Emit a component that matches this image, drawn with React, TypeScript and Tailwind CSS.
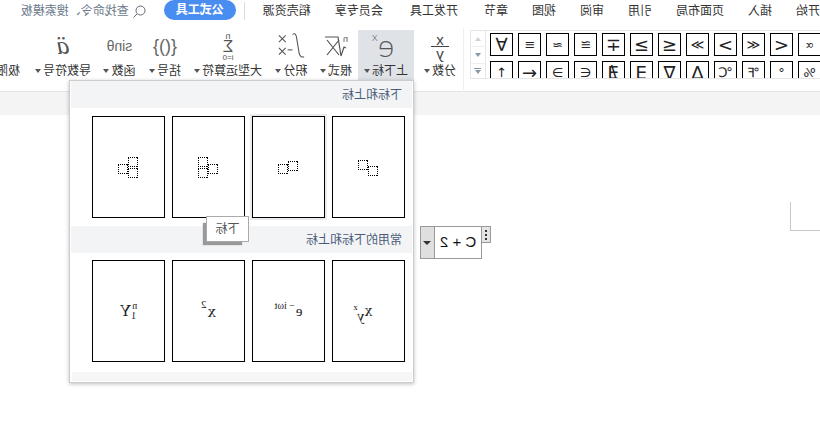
import type { ReactNode } from "react";

const tabs = [
  { name: "开始", cls: "" },
  { name: "插入", cls: "" },
  { name: "页面布局", cls: "" },
  { name: "引用", cls: "" },
  { name: "审阅", cls: "" },
  { name: "视图", cls: "" },
  { name: "章节", cls: "" },
  { name: "开发工具", cls: "ml-[2px]" },
  { name: "会员专享", cls: "ml-[3px]" },
  { name: "稻壳资源", cls: "" },
];

const symbols = [
  { s: "∝", big: false }, { s: "<", big: true }, { s: "≪", big: false }, { s: ">", big: true },
  { s: "≫", big: false }, { s: "≤", big: true }, { s: "≥", big: true }, { s: "∓", big: true },
  { s: "≅", big: false }, { s: "≈", big: false }, { s: "≡", big: false }, { s: "∀", big: true },
  { s: "%", big: false }, { s: "°", big: false }, { s: "℉", big: false }, { s: "℃", big: false },
  { s: "∆", big: true }, { s: "∇", big: true }, { s: "∃", big: true }, { s: "∄", big: true },
  { s: "∈", big: false }, { s: "∋", big: false }, { s: "←", big: true }, { s: "↑", big: false },
];

function Caret() {
  return <span className="inline-block w-0 h-0 border-x-[3px] border-t-[4px] border-x-transparent border-t-[#555]" />;
}

function RibbonButton({ label, width, ml, active, children }: { label: string; width: string; ml: string; active?: boolean; children: ReactNode }) {
  return (
    <div className={`${width} ${ml} ${active ? "bg-[#dfe3e8]" : ""} h-[50px] shrink-0 flex flex-col items-center justify-between`}>
      <div className="h-[32px] w-full flex items-center justify-center text-[#555]">{children}</div>
      <div className="h-[18px] flex items-center gap-[2px] text-[12px] text-[#333] whitespace-nowrap leading-none">
        {label}
        <Caret />
      </div>
    </div>
  );
}

function TemplateCell({ hover, children }: { hover?: boolean; children: ReactNode }) {
  return (
    <div className={`relative w-[73px] h-[102px] border border-black bg-white flex items-center justify-center ${hover ? "outline-[2px] outline-[#e8ecf0]" : ""}`}>
      {children}
    </div>
  );
}

function Dot({ className }: { className: string }) {
  return <span className={`absolute w-[10px] h-[10px] border border-dotted border-black ${className}`} />;
}

function SectionHeader({ title }: { title: string }) {
  return (
    <div className="mx-[1px] h-[27px] bg-[#f3f4f6] flex items-center pl-[10px] text-[12px] text-[#4a5a78]">{title}</div>
  );
}

export default function App() {
  return (
    <div className="relative w-[820px] h-[421px] overflow-hidden bg-white -scale-x-100 font-['Liberation_Sans','Noto_Sans_CJK_SC',sans-serif]">
      {/* tab row */}
      <div className="h-[22px] flex items-center text-[12px] text-[#333]">
        <div className="flex gap-6">
          {tabs.map((t) => (
            <span key={t.name} className={`${t.cls} whitespace-nowrap`}>{t.name}</span>
          ))}
        </div>
        <div className="ml-[18px] w-px h-[18px] bg-[#ddd]" />
        <div className="ml-[8px] w-[72px] h-[20px] -mt-[2px] rounded-full bg-[#4a8df0] text-white font-bold flex items-center justify-center">公式工具</div>
        <svg className="ml-[18px]" width="13" height="13" viewBox="0 0 13 13" fill="none" stroke="#667">
          <circle cx="5.5" cy="5.5" r="4.5" />
          <path d="M9 9l3.5 3.5" />
        </svg>
        <span className="ml-[4px] whitespace-nowrap text-[#6c7a8c]">查找命令、搜索模板</span>
      </div>

      {/* ribbon */}
      <div className="h-[70px] flex pt-[8px] border-b border-[#e4e4e4]">
        <div className="-ml-[1px] w-[351px] h-[49px] shrink-0 flex overflow-hidden border-y border-r border-[#e6e6e6] bg-white">
          <div className="w-[335px] shrink-0 grid grid-cols-[repeat(12,23px)] auto-rows-[23px] gap-[5px] pt-[2px]">
            {symbols.map(({ s, big }) => (
              <div key={s} className={`border border-black flex items-center justify-center leading-none text-[#222] font-['DejaVu_Sans',sans-serif] ${big ? "text-[18px]" : "text-[13px]"}`}>{s}</div>
            ))}
          </div>
          <div className="w-[15px] flex flex-col border-l border-[#e6e6e6] text-[#9aa5b1]">
            <div className="h-[16px] flex items-center justify-center border-b border-[#eee]">
              <span className="w-0 h-0 border-x-[3px] border-b-[4px] border-x-transparent border-b-[#ccd2d8]" />
            </div>
            <div className="h-[17px] flex items-center justify-center border-b border-[#eee]">
              <span className="w-0 h-0 border-x-[3px] border-t-[4px] border-x-transparent border-t-[#8d98a5]" />
            </div>
            <div className="h-[14px] flex flex-col items-center justify-center gap-[1px]">
              <span className="w-[7px] h-px bg-[#8d98a5]" />
              <span className="w-0 h-0 border-x-[3px] border-t-[4px] border-x-transparent border-t-[#8d98a5]" />
            </div>
          </div>
        </div>
        <div className="ml-[6px] w-px h-[62px] -mt-[2px] bg-[#eee] shrink-0" />

        <RibbonButton label="分数" width="w-[36px]" ml="ml-[5px]">
          <div className="flex flex-col items-center text-[15px] leading-[11px] text-[#444]">
            <span>x</span>
            <span className="w-[18px] h-px my-[1px] bg-[#444]" />
            <span>y</span>
          </div>
        </RibbonButton>
        <RibbonButton label="上下标" width="w-[56px]" ml="ml-[8px]" active>
          <div className="relative mt-[3px] text-[28px] leading-none text-[#555] font-['DejaVu_Sans',sans-serif] font-light">
            e<span className="absolute -top-[2px] -right-[6px] text-[11px] leading-none">x</span>
          </div>
        </RibbonButton>
        <RibbonButton label="根式" width="w-[32px]" ml="ml-[6px]">
          <svg width="32" height="26" viewBox="0 0 32 26" fill="none" stroke="#555" strokeWidth="1.2">
            <path d="M6 15l2-1 3 9 3-19h13" />
            <path d="M13 7l12 15M25 7L13 22" />
            <text x="4" y="9" fontSize="9" fill="#555" stroke="none">n</text>
          </svg>
        </RibbonButton>
        <RibbonButton label="积分" width="w-[33px]" ml="ml-[12px]">
          <svg width="34" height="28" viewBox="0 0 34 28" fill="none" stroke="#555" strokeWidth="1.1">
            <path d="M4 25c2 1 4 0 5-3l3-18c1-3 2-3 4-2" />
            <path d="M16 18h5" />
            <path d="M23 3l7 7M30 3l-7 7M23 16l7 7M30 16l-7 7" />
          </svg>
        </RibbonButton>
        <RibbonButton label="大型运算符" width="w-[68px]" ml="ml-[13px]">
          <div className="flex flex-col items-center mt-[2px] leading-none text-[#555]">
            <span className="text-[9px] leading-[7px]">n</span>
            <span className="text-[17px] leading-[14px]">Σ</span>
            <span className="text-[8px] leading-[7px]">i=0</span>
          </div>
        </RibbonButton>
        <RibbonButton label="括号" width="w-[32px]" ml="ml-[13px]">
          <span className="text-[18px] leading-none font-light text-[#666] whitespace-nowrap">{"{()}"}</span>
        </RibbonButton>
        <RibbonButton label="函数" width="w-[31px]" ml="ml-[14px]">
          <span className="text-[14px] leading-none text-[#666] whitespace-nowrap">sinθ</span>
        </RibbonButton>
        <RibbonButton label="导数符号" width="w-[56px]" ml="ml-[13px]">
          <span className="text-[26px] leading-none italic text-[#555] font-['Liberation_Serif',serif]">ä</span>
        </RibbonButton>
        <RibbonButton label="极限" width="w-[36px]" ml="ml-[13px]">
          <span />
        </RibbonButton>
      </div>

      {/* grey band under the ribbon */}
      <div className="h-[23px] bg-[#f4f4f4]" />

      {/* page corner mark */}
      <div className="absolute left-0 top-[202px] w-[30px] h-[29px] border-r border-b border-[#c8c8c8]" />

      {/* equation box */}
      <div className="absolute left-[329px] top-[226px] flex items-start">
        <div className="w-[9px] h-[17px] bg-[#e4e4e4] border border-[#999] border-r-0 flex flex-col items-center justify-center gap-[2px]">
          <span className="w-[2px] h-[2px] bg-[#333]" />
          <span className="w-[2px] h-[2px] bg-[#333]" />
          <span className="w-[2px] h-[2px] bg-[#333]" />
        </div>
        <div className="w-[62px] h-[33px] flex border border-[#999]">
          <div className="w-[46px] flex items-center justify-center text-[15px] text-[#111] whitespace-nowrap font-['Liberation_Sans',sans-serif]">C + 2</div>
          <div className="flex-1 bg-[#dfdfdf] border-l border-[#999] flex items-center justify-center">
            <span className="w-0 h-0 border-x-[4px] border-t-[4px] border-x-transparent border-t-[#333]" />
          </div>
        </div>
      </div>

      {/* dropdown */}
      <div className="absolute left-[406px] top-[80px] w-[345px] h-[303px] bg-white border border-[#ccc] shadow-[0_1px_4px_rgba(0,0,0,0.25)]">
        <SectionHeader title="下标和上标" />
        <div className="flex gap-[7px] pl-[8px] pt-[8px]">
          <TemplateCell>
            <Dot className="left-[26px] top-[49px]" />
            <Dot className="left-[36px] top-[43px]" />
          </TemplateCell>
          <TemplateCell hover>
            <Dot className="left-[26px] top-[44px]" />
            <Dot className="left-[36px] top-[47px]" />
          </TemplateCell>
          <TemplateCell>
            <Dot className="left-[26px] top-[47px]" />
            <Dot className="left-[36px] top-[40px]" />
            <Dot className="left-[36px] top-[51px]" />
          </TemplateCell>
          <TemplateCell>
            <Dot className="left-[26px] top-[40px]" />
            <Dot className="left-[26px] top-[51px]" />
            <Dot className="left-[36px] top-[47px]" />
          </TemplateCell>
        </div>
        <div className="mt-[8px]">
          <SectionHeader title="常用的下标和上标" />
        </div>
        <div className="flex gap-[7px] pl-[8px] pt-[7px] font-['Liberation_Serif',serif] text-[#222]">
          <TemplateCell>
            <span className="relative text-[16px] leading-none">
              x
              <span className="absolute left-[8px] top-[6px] text-[15px] leading-none">y</span>
              <span className="absolute left-[15px] top-0 text-[9px] leading-none">z</span>
            </span>
          </TemplateCell>
          <TemplateCell>
            <span className="flex items-start text-[15px] leading-none">
              e
              <span className="ml-px -mt-[3px] text-[10px] leading-none whitespace-nowrap">− iωt</span>
            </span>
          </TemplateCell>
          <TemplateCell>
            <span className="flex items-start text-[17px] leading-none">
              x
              <span className="ml-[1px] -mt-[4px] text-[11px] leading-none">2</span>
            </span>
          </TemplateCell>
          <TemplateCell>
            <span className="relative pl-[6px] text-[16px] leading-none">
              <span className="absolute left-0 -top-[2px] text-[10px] leading-none">n</span>
              <span className="absolute left-[1px] top-[8px] text-[10px] leading-none">1</span>
              Y
            </span>
          </TemplateCell>
        </div>
        <div className="absolute left-[1px] right-[2px] bottom-[1px] h-[9px] bg-[#f6f6f6]" />
      </div>

      {/* tooltip */}
      <div className="absolute left-[571px] top-[216px] w-[43px] h-[26px] bg-white border border-[#aaa] shadow-[5px_5px_1px_-2px_#999] flex items-center justify-center text-[12px] text-[#555]">下标</div>
    </div>
  );
}
